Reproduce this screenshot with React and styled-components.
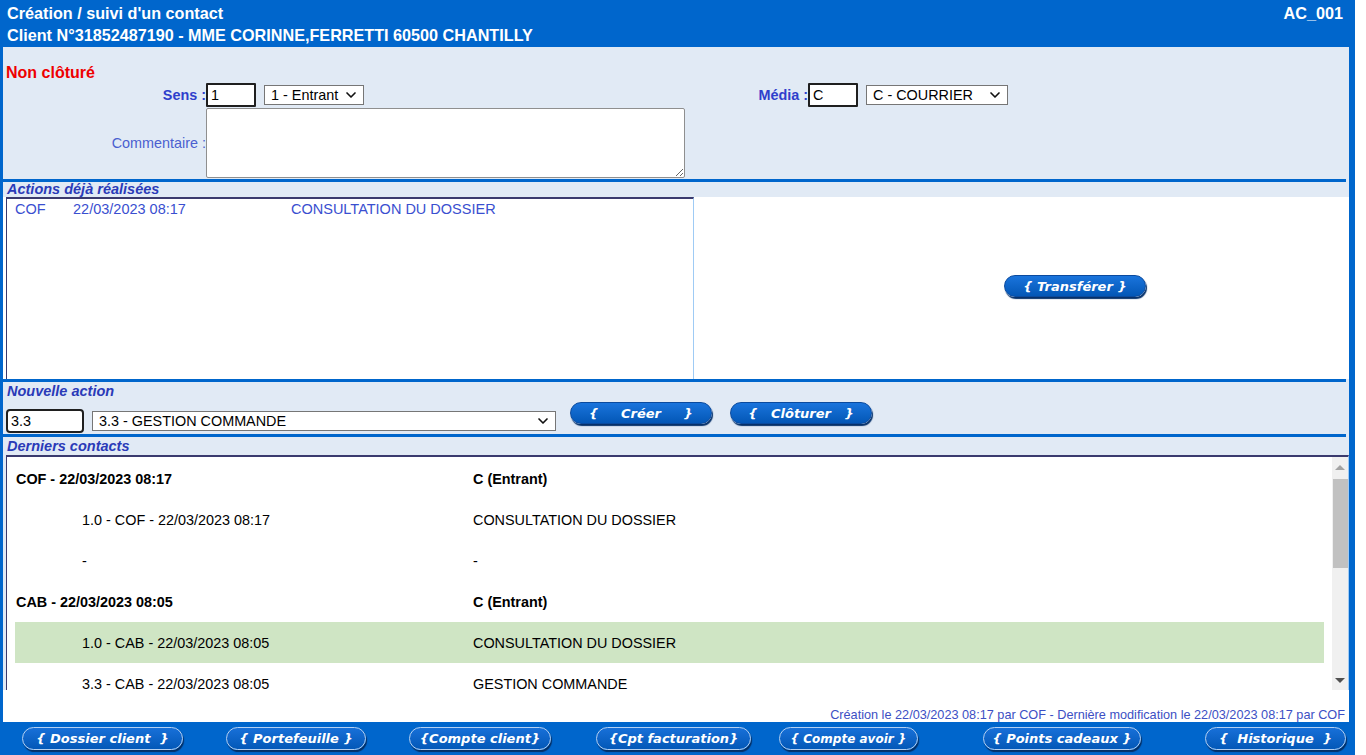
import React from 'react'
import styled, { createGlobalStyle } from 'styled-components'
import { ChevronDown } from 'lucide-react'

const GlobalStyle = createGlobalStyle`
    body {
        margin: 0;
        background: #ffffff;
        font-family: "Liberation Sans", Arial, sans-serif;
    }
`

const Page = styled.div`
    width: 1355px;
    height: 755px;
    background: #0066cc;
    display: flex;
    flex-direction: column;
`

const Header = styled.div`
    height: 47px;
    padding: 0 12px 0 7px;
    color: #ffffff;
    font-weight: bold;
    font-size: 16.2px;
    display: flex;
    flex-direction: column;
    justify-content: center;
    line-height: 22px;
`

const HeaderLine = styled.div`
    display: flex;
    justify-content: space-between;
`

const Body = styled.div`
    display: flex;
    flex-direction: column;
    margin: 0 6px 0 3px;
    flex: 1;
    background: #e1eaf5;
`

const TopPanel = styled.div`
    height: 132px;
    box-sizing: border-box;
    padding-top: 16px;
`

const Status = styled.div`
    color: #ee0000;
    font-size: 16px;
    font-weight: bold;
    line-height: 20px;
    padding-left: 3px;
`

const FormGrid = styled.div`
    display: grid;
    grid-template-columns: 203px 479px 123px 1fr;
    row-gap: 1px;
    align-items: center;
`

const Label = styled.div`
    text-align: right;
    font-size: 14.4px;
    color: ${props => props.strong ? '#2f3fcc' : '#4a5fd0'};
    font-weight: ${props => props.strong ? 'bold' : 'normal'};
`

const Field = styled.div`
    display: flex;
    align-items: center;
    gap: 8px;
`

const CodeInput = styled.input`
    width: ${props => props.w}px;
    height: 24px;
    box-sizing: border-box;
    border: 2px solid #1f1f1f;
    border-radius: ${props => props.round ? 4 : 1}px;
    padding: 0 3px;
    font-family: "Liberation Sans", Arial, sans-serif;
    font-size: 14.4px;
    color: #000;
    background: #fff;
`

const SelectWrap = styled.div`
    position: relative;
    width: ${props => props.w}px;
    height: 20px;
    color: #111;
    svg {
        position: absolute;
        right: 5px;
        top: 2px;
        pointer-events: none;
    }
`

const Select = styled.select`
    width: 100%;
    height: 100%;
    box-sizing: border-box;
    border: 1px solid #767676;
    border-radius: 0;
    background: #fff;
    appearance: none;
    font-family: "Liberation Sans", Arial, sans-serif;
    font-size: 14.4px;
    color: #000;
    padding: 0 2px 0 6px;
`

const Comment = styled.textarea`
    width: 479px;
    height: 70px;
    box-sizing: border-box;
    border: 1px solid #8f8f8f;
    border-radius: 2px;
    background: #fff;
    resize: both;
    display: block;
`

const Separator = styled.div`
    height: 3px;
    background: #0066cc;
    margin-right: 3px;
`

const SectionTitle = styled.div`
    height: ${props => props.h || 15}px;
    line-height: ${props => props.h || 15}px;
    padding-left: 4px;
    font-size: 14.5px;
    font-weight: bold;
    font-style: italic;
    color: #2a3ab8;
`

const ActionsArea = styled.div`
    height: 182px;
    display: flex;
    background: #ffffff;
    padding-left: 3px;
`

const ActionList = styled.div`
    width: 688px;
    box-sizing: border-box;
    border-top: 2px solid #3a3a6e;
    border-left: 1px solid #3a3a6e;
    border-right: 1px solid #9fcbf5;
    padding: 1px 0 0 8px;
`

const ActionRow = styled.div`
    display: grid;
    grid-template-columns: 58px 218px auto;
    font-size: 14.5px;
    line-height: 18px;
    color: #3a4fd0;
`

const ActionSide = styled.div`
    flex: 1;
    display: flex;
    align-items: center;
    padding: 0 0 4px 310px;
`

const PillButton = styled.button`
    width: ${props => props.w}px;
    height: ${props => props.h || 22}px;
    border-radius: 12px;
    border: 1px solid ${props => props.light ? '#b4d0f2' : '#0a4a9e'};
    background: ${props => props.light
        ? 'linear-gradient(#1870d8, #0358b8)'
        : 'linear-gradient(#1a74dc, #0357b6)'};
    box-shadow: 1px 2px 1px ${props => props.light ? '#032f66' : '#06316a'};
    color: #ffffff;
    font-family: "DejaVu Sans", Verdana, sans-serif;
    font-style: italic;
    font-weight: bold;
    font-size: ${props => props.fs || 13}px;
    white-space: pre;
    padding: 0;
    cursor: pointer;
`

const NewActionRow = styled.div`
    height: 34px;
    display: flex;
    align-items: flex-start;
    padding-left: 3px;
`

const NewActionFields = styled.div`
    display: flex;
    align-items: center;
    gap: 8px;
    margin-top: 9px;
`

const NewActionButtons = styled.div`
    display: flex;
    gap: 18px;
    margin-left: 14px;
    margin-top: 2px;
`

const ContactsBox = styled.div`
    height: 235px;
    margin-left: 3px;
    display: flex;
    background: #ffffff;
    box-sizing: border-box;
    border-top: 2px solid #3a3a6e;
    border-left: 1px solid #3a3a6e;
    border-right: 1px solid #9fcbf5;
    overflow: hidden;
`

const ContactsList = styled.div`
    flex: 1;
    padding: 1px 8px 0 8px;
`

const ContactRow = styled.div`
    display: grid;
    grid-template-columns: 458px auto;
    height: 41px;
    align-items: center;
    font-size: 14.4px;
    color: #000;
    font-weight: ${props => props.head ? 'bold' : 'normal'};
    background: ${props => props.selected ? '#cfe5c4' : 'transparent'};
`

const ContactLeft = styled.span`
    padding-left: ${props => props.head ? 1 : 67}px;
`

const ScrollBar = styled.div`
    width: 16px;
    background: #f0f0f0;
    display: flex;
    flex-direction: column;
    align-items: center;
    padding-top: 2px;
`

const ScrollArrow = styled.div`
    width: 0;
    height: 0;
    border-left: 5px solid transparent;
    border-right: 5px solid transparent;
    ${props => props.down
        ? 'border-top: 5px solid #505050; margin-top: auto; margin-bottom: 7px;'
        : 'border-bottom: 5px solid #a3a3a3; margin-top: 6px;'}
`

const ScrollThumb = styled.div`
    width: 15px;
    height: 89px;
    background: #c1c1c1;
    margin-top: 9px;
`

const Footer = styled.div`
    height: 32px;
    background: #ffffff;
    display: flex;
    align-items: flex-end;
    justify-content: flex-end;
    padding: 0 4px 0 0;
    box-sizing: border-box;
    font-size: 12.7px;
    color: #3c4fc4;
`

const BottomBar = styled.div`
    height: 33px;
    display: grid;
    grid-template-columns: 205px 182px 186px 201px 149px 278px 149px;
    align-items: center;
    justify-items: center;
`

const actions = [
    { code: 'COF', date: '22/03/2023 08:17', label: 'CONSULTATION DU DOSSIER' }
]

const contacts = [
    { left: 'COF - 22/03/2023 08:17', right: 'C (Entrant)', head: true },
    { left: '1.0 - COF - 22/03/2023 08:17', right: 'CONSULTATION DU DOSSIER' },
    { left: '-', right: '-' },
    { left: 'CAB - 22/03/2023 08:05', right: 'C (Entrant)', head: true },
    { left: '1.0 - CAB - 22/03/2023 08:05', right: 'CONSULTATION DU DOSSIER', selected: true },
    { left: '3.3 - CAB - 22/03/2023 08:05', right: 'GESTION COMMANDE' }
]

const bottomButtons = [
    { text: '{ Dossier client  }', w: 161 },
    { text: '{ Portefeuille }', w: 140 },
    { text: '{Compte client}', w: 142 },
    { text: '{Cpt facturation}', w: 155 },
    { text: '{ Compte avoir }', w: 139, fs: 12 },
    { text: '{ Points cadeaux }', w: 158 },
    { text: '{  Historique  }', w: 141 }
]

const Dropdown = ({ w, value, label }) => (
    <SelectWrap w={w}>
        <Select defaultValue={value}>
            <option value={value}>{label}</option>
        </Select>
        <ChevronDown size={16} strokeWidth={2.5} />
    </SelectWrap>
)

export default function App() {
    return (
        <Page>
            <GlobalStyle />
            <Header>
                <HeaderLine>
                    <span>Création / suivi d'un contact</span>
                    <span>AC_001</span>
                </HeaderLine>
                <HeaderLine>
                    <span>Client N°31852487190 - MME CORINNE,FERRETTI 60500 CHANTILLY</span>
                </HeaderLine>
            </Header>
            <Body>
                <TopPanel>
                    <Status>Non clôturé</Status>
                    <FormGrid>
                        <Label strong>Sens :</Label>
                        <Field>
                            <CodeInput w={50} defaultValue="1" />
                            <Dropdown w={100} value="1" label="1 - Entrant" />
                        </Field>
                        <Label strong>Média :</Label>
                        <Field>
                            <CodeInput w={50} defaultValue="C" />
                            <Dropdown w={142} value="C" label="C - COURRIER" />
                        </Field>
                        <Label>Commentaire :</Label>
                        <Comment />
                    </FormGrid>
                </TopPanel>
                <Separator />
                <SectionTitle>Actions déjà réalisées</SectionTitle>
                <ActionsArea>
                    <ActionList>
                        {actions.map((a, i) => (
                            <ActionRow key={i}>
                                <span>{a.code}</span>
                                <span>{a.date}</span>
                                <span>{a.label}</span>
                            </ActionRow>
                        ))}
                    </ActionList>
                    <ActionSide>
                        <PillButton w={142}>{'{ Transférer }'}</PillButton>
                    </ActionSide>
                </ActionsArea>
                <Separator />
                <SectionTitle h={18}>Nouvelle action</SectionTitle>
                <NewActionRow>
                    <NewActionFields>
                        <CodeInput w={78} round defaultValue="3.3" />
                        <Dropdown w={464} value="3.3" label="3.3 - GESTION COMMANDE" />
                    </NewActionFields>
                    <NewActionButtons>
                        <PillButton w={142}>{'{     Créer     }'}</PillButton>
                        <PillButton w={142}>{'{   Clôturer   }'}</PillButton>
                    </NewActionButtons>
                </NewActionRow>
                <Separator />
                <SectionTitle h={18}>Derniers contacts</SectionTitle>
                <ContactsBox>
                    <ContactsList>
                        {contacts.map((c, i) => (
                            <ContactRow key={i} head={c.head} selected={c.selected}>
                                <ContactLeft head={c.head}>{c.left}</ContactLeft>
                                <span>{c.right}</span>
                            </ContactRow>
                        ))}
                    </ContactsList>
                    <ScrollBar>
                        <ScrollArrow />
                        <ScrollThumb />
                        <ScrollArrow down />
                    </ScrollBar>
                </ContactsBox>
                <Footer>
                    Création le 22/03/2023 08:17 par COF - Dernière modification le 22/03/2023 08:17 par COF
                </Footer>
            </Body>
            <BottomBar>
                {bottomButtons.map((b, i) => (
                    <PillButton key={i} light w={b.w} h={23} fs={b.fs}>{b.text}</PillButton>
                ))}
            </BottomBar>
        </Page>
    )
}
